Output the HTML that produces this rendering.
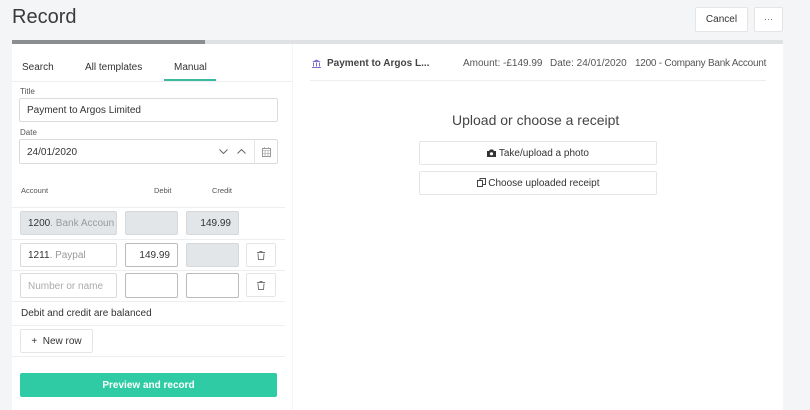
<!DOCTYPE html>
<html><head><meta charset="utf-8"><style>
*{box-sizing:border-box;margin:0;padding:0}
body{width:810px;height:410px;overflow:hidden;background:#f4f5f6;font-family:"Liberation Sans",sans-serif;color:#333;position:relative;font-size:10px}
.abs{position:absolute}
h1{position:absolute;left:12px;top:6px;font-size:20px;font-weight:normal;color:#3a3a3a}
.btn{position:absolute;background:#fff;border:1px solid #e3e5e8;border-radius:2px;text-align:center;color:#333}
.bar{position:absolute;left:12px;top:40px;width:771px;height:4px;background:#dfe1e3}
.bar i{position:absolute;left:0;top:0;width:193px;height:4px;background:#8a8e91}
.panel{position:absolute;background:#fff;top:44px;bottom:0}
.inp{position:absolute;border:1px solid #d9dcdf;border-radius:2px;background:#fff;font-size:10px;padding-left:7px;padding-top:1px;display:flex;align-items:center}
.grey{background:#e3e6e9;border-color:#d6d9dc}
.line{position:absolute;height:1px;background:#eceef0}
.lbl{position:absolute;font-size:8px;color:#555}
.num{justify-content:flex-end;padding-right:7px}
.trash{position:absolute;width:30px;height:24px;border:1px solid #e3e5e8;border-radius:2px;display:flex;align-items:center;justify-content:center}
</style></head><body>
<h1>Record</h1>
<div class="btn" style="left:695px;top:7px;width:53px;height:25px;line-height:24px;font-size:10px">Cancel</div>
<div class="btn" style="left:754px;top:7px;width:29px;height:25px;line-height:22px;font-size:9px;color:#666">···</div>
<div class="bar"><i></i></div>
<div class="panel" style="left:12px;width:280px"></div>
<div class="panel" style="left:293px;width:490px"></div>

<div class="abs" style="left:22px;top:62px;font-size:10px">Search</div>
<div class="abs" style="left:85px;top:62px;font-size:10px">All templates</div>
<div class="abs" style="left:174px;top:62px;font-size:10px">Manual</div>
<div class="abs" style="left:164px;top:79px;width:52px;height:2px;background:#3cba9f"></div>
<div class="line" style="left:12px;top:81px;width:280px"></div>
<div class="lbl" style="left:20px;top:87px">Title</div>
<div class="inp" style="left:19px;top:98px;width:259px;height:24px">Payment to Argos Limited</div>
<div class="lbl" style="left:20px;top:128px">Date</div>
<div class="inp" style="left:19px;top:139px;width:259px;height:25px">24/01/2020</div>
<svg class="abs" style="left:219px;top:149px" width="9" height="5" viewBox="0 0 9 5"><path d="M.5 .5L4.5 4.5 8.5 .5" fill="none" stroke="#666"/></svg>
<svg class="abs" style="left:237px;top:149px" width="9" height="5" viewBox="0 0 9 5"><path d="M.5 4.5L4.5 .5 8.5 4.5" fill="none" stroke="#666"/></svg>
<div class="abs" style="left:254px;top:139px;width:1px;height:25px;background:#e3e5e8"></div>
<svg class="abs" style="left:262px;top:147px" width="9" height="10" viewBox="0 0 9 10"><rect x=".5" y="1.5" width="8" height="8" fill="none" stroke="#999"/><path d="M.5 3.5h8M3 3.5v6M6 3.5v6M.5 6.5h8M2.5 0v2M6.5 0v2" stroke="#999" stroke-width=".6"/></svg>

<div class="lbl" style="left:21px;top:186px;font-size:7.5px">Account</div>
<div class="lbl" style="left:154px;top:186px;font-size:7.5px">Debit</div>
<div class="lbl" style="left:212px;top:186px;font-size:7.5px">Credit</div>
<div class="line" style="left:12px;top:207px;width:273px"></div>
<div class="inp grey" style="left:20px;top:211px;width:97px;height:24px;color:#999"><span style="color:#333">1200</span>. Bank Accoun</div>
<div class="inp grey" style="left:125px;top:211px;width:53px;height:24px"></div>
<div class="inp grey num" style="left:186px;top:211px;width:53px;height:24px">149.99</div>
<div class="line" style="left:12px;top:239px;width:273px"></div>
<div class="inp" style="left:20px;top:243px;width:97px;height:24px;color:#999"><span style="color:#333">1211</span>. Paypal</div>
<div class="inp num" style="left:125px;top:243px;width:53px;height:24px;border-color:#bbb">149.99</div>
<div class="inp grey" style="left:186px;top:243px;width:53px;height:24px"></div>
<div class="trash" style="left:246px;top:243px"><svg width="8" height="9" viewBox="0 0 8 9"><path d="M0 1.5h8M3 1.5V.5h2v1M1 2.5l.5 6h5l.5-6" fill="none" stroke="#777"/></svg></div>
<div class="line" style="left:12px;top:270px;width:273px"></div>
<div class="inp" style="left:20px;top:273px;width:97px;height:25px;color:#aaa">Number or name</div>
<div class="inp" style="left:125px;top:273px;width:53px;height:25px;border-color:#bbb"></div>
<div class="inp" style="left:186px;top:273px;width:53px;height:25px;border-color:#bbb"></div>
<div class="trash" style="left:246px;top:273px"><svg width="8" height="9" viewBox="0 0 8 9"><path d="M0 1.5h8M3 1.5V.5h2v1M1 2.5l.5 6h5l.5-6" fill="none" stroke="#777"/></svg></div>
<div class="line" style="left:12px;top:301px;width:273px"></div>
<div class="abs" style="left:21px;top:308px;font-size:10px">Debit and credit are balanced</div>
<div class="line" style="left:12px;top:325px;width:273px"></div>
<div class="btn" style="left:20px;top:329px;width:73px;height:24px;line-height:23px;font-size:10px">+&nbsp; New row</div>
<div class="line" style="left:12px;top:356px;width:273px"></div>
<div class="abs" style="left:20px;top:373px;width:257px;height:24px;background:#2ecba4;border-radius:2px;color:#fff;font-weight:bold;font-size:10px;text-align:center;line-height:25px">Preview and record</div>

<svg class="abs" style="left:312px;top:59px" width="9" height="9" viewBox="0 0 9 9"><path d="M0 3L4.5 .5 9 3zM1 3.5h1v4H1zM4 3.5h1v4H4zM7 3.5h1v4H7zM0 8h9v1H0z" fill="#7b6fd6"/></svg>
<div class="abs" style="left:327px;top:58px;font-size:10px;font-weight:bold;color:#444">Payment to Argos L...</div>
<div class="abs" style="left:463px;top:58px;font-size:10px;color:#555">Amount: -£149.99</div>
<div class="abs" style="left:550px;top:58px;font-size:10px;color:#555">Date: 24/01/2020</div>
<div class="abs" style="left:635px;top:58px;font-size:10px;color:#555;letter-spacing:-0.25px">1200 - Company Bank Account</div>
<div class="line" style="left:310px;top:80px;width:456px"></div>
<div class="abs" style="left:452px;top:112px;font-size:14px;color:#444">Upload or choose a receipt</div>
<div class="btn" style="left:419px;top:141px;width:238px;height:24px;line-height:23px;font-size:10px"><svg width="9" height="8" viewBox="0 0 9 8" style="vertical-align:-1px"><path d="M0 2h2l1-1.5h3L7 2h2v6H0z" fill="#333"/><circle cx="4.5" cy="4.8" r="1.6" fill="#fff"/></svg>&nbsp;Take/upload a photo</div>
<div class="btn" style="left:419px;top:171px;width:238px;height:24px;line-height:23px;font-size:10px"><svg width="9" height="9" viewBox="0 0 9 9" style="vertical-align:-1px"><path d="M.5 2.5h5v6h-5zM3 2.5V.5h5.5v6h-3" fill="none" stroke="#444"/></svg>&nbsp;Choose uploaded receipt</div>
</body></html>
